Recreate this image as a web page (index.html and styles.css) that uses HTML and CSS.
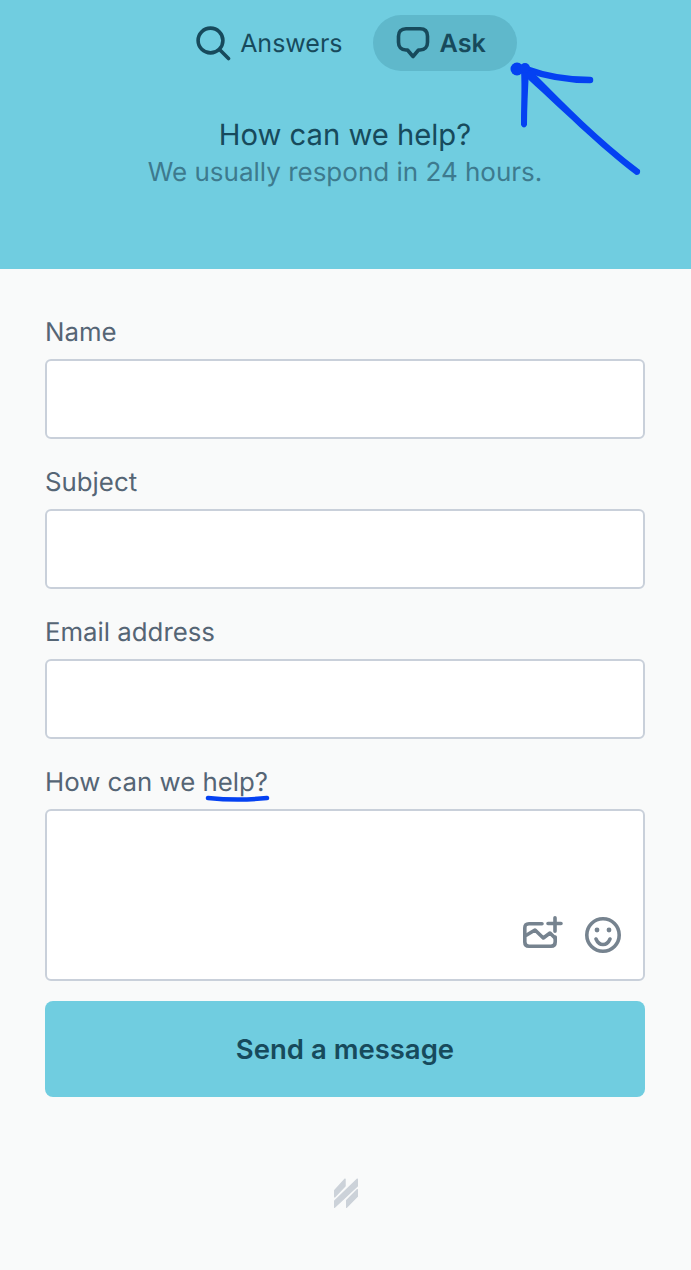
FILE: index.html
```html
<!DOCTYPE html>
<html lang="en">
<head>
    <meta charset="UTF-8">
    <title>How can we help?</title>
    <link rel="stylesheet" href="styles.css">
</head>
<body>

<header class="top">
    <nav class="tabs">
        <a class="tab">
            <svg class="tab-icon" viewBox="0 0 36 36" fill="none" stroke="#174a5c" stroke-width="3.6" stroke-linecap="round">
                <circle cx="15.500" cy="15.500" r="12.400"/>
                <path d="M24.500 24.500L33.500 33.500"/>
            </svg>
            <span class="tab-text">Answers</span>
        </a>
        <a class="tab active">
            <svg class="tab-icon" viewBox="0 0 36 36" fill="none" stroke="#174a5c" stroke-width="3.6" stroke-linejoin="round">
                <path d="M11 3.800h14c5 0 7.500 3 7.500 7.500v6c0 4.500-2.500 7.700-7.500 7.700h-1.500L18 31.500 12.500 25H11c-5 0-7.500-3.200-7.500-7.700v-6C3.500 6.800 6 3.800 11 3.800z"/>
            </svg>
            <span class="tab-text">Ask</span>
        </a>
    </nav>
    <h1 class="title">How can we help?</h1>
    <p class="subtitle">We usually respond in 24 hours.</p>
</header>

<form class="form">
    <label class="field">
        <span class="label">Name</span>
        <input class="input" type="text">
    </label>
    <label class="field">
        <span class="label">Subject</span>
        <input class="input" type="text">
    </label>
    <label class="field">
        <span class="label">Email address</span>
        <input class="input" type="text">
    </label>
    <label class="field field-last">
        <span class="label">How can we help?</span>
        <div class="message">
            <div class="message-tools">
                <svg class="tool-image" viewBox="0 0 40 32" fill="none" stroke="#76838f" stroke-width="3.600" stroke-linecap="round" stroke-linejoin="round">
                    <path d="M19 7.800H6C3 7.800 1.800 9 1.800 12v14c0 3 1.200 4.200 4.200 4.200h22c3 0 4.200-1.200 4.200-4.200V21"/>
                    <path d="M3.700 19L12 14l8.300 8L27 17l5 5"/>
                    <path d="M32 1.800v13.500M25 7.500h13"/>
                </svg>
                <svg class="tool-smile" viewBox="0 0 36 36" fill="none" stroke="#76838f" stroke-width="3.6" stroke-linecap="round">
                    <circle cx="18" cy="18" r="16.200"/>
                    <path d="M11 22c1.500 3.500 4 5.500 7 5.500s5.500-2 7-5.500"/>
                    <circle cx="12" cy="13" r="2.400" fill="#76838f" stroke="none"/>
                    <circle cx="24" cy="13" r="2.400" fill="#76838f" stroke="none"/>
                </svg>
            </div>
        </div>
    </label>
    <button class="send" type="button">Send a message</button>
</form>

<footer class="foot">
    <svg class="logo" viewBox="0 0 24 30" fill="#ccd2d9" stroke="#ccd2d9" stroke-width="1.200" stroke-linejoin="round">
        <path d="M.6 12.500v6.500L11.100 8V1z"/>
        <path d="M.6 23v6.400L23.400 8V1z"/>
        <path d="M12.600 22.500v6.900l10.800-11V11.500z"/>
    </svg>
</footer>

<svg class="scribble" viewBox="0 0 691 1270" fill="none" stroke="#0441f2" stroke-linecap="round" stroke-linejoin="round">
    <path d="M517 69L526 69C545 76 565 80 590 80" stroke-width="6.500"/>
    <path d="M521 70L529 70C528 90 527 108 527 125Q524 130 521 125C521 105 522 88 521 70z" fill="#0441f2" stroke="none"/>
    <path d="M520 68L532 71C565 104 600 140 640 170Q641 175 636 175C600 148 560 108 520 72z" fill="#0441f2" stroke="none"/>
    <circle cx="517" cy="69" r="6.500" fill="#0441f2" stroke="none"/>
    <circle cx="525" cy="68" r="5" fill="#0441f2" stroke="none"/>
    <path d="M208 798C228 800 248 800 267 798" stroke-width="4.500"/>
</svg>

</body>
</html>
```

FILE: styles.css
```css
* {
    box-sizing: border-box;
}

body {
    margin: 0;
    position: relative;
    min-height: 1270px;
    background: #f9fafa;
    font-family: Inter, "Noto Sans", sans-serif;
    color: #556575;
    text-rendering: geometricPrecision;
}

.top {
    height: 269px;
    padding: 15px 2px 0 0;
    background: #70cde0;
    text-align: center;
    color: #174a5c;
}

.tabs {
    display: flex;
    justify-content: center;
}

.tab {
    display: flex;
    align-items: center;
    gap: 9px;
    height: 56px;
    padding: 0 30px 0 23px;
    border-radius: 28px;
    font-size: 25px;
}

.tab.active {
    padding: 0 31px 0 22px;
    background: #5fb8cb;
    font-size: 25.200px;
    font-weight: 600;
}

.tab-icon {
    width: 36px;
    height: 36px;
}

.tab-text {
    padding-top: 1px;
}

.title {
    margin: 47px 0 0 1px;
    font-size: 29.200px;
    line-height: 36px;
    font-weight: 400;
}

.subtitle {
    margin: 2px 0 0 1px;
    font-size: 26px;
    line-height: 34px;
    color: #3d7a8e;
}

.form {
    display: flex;
    flex-direction: column;
    padding: 46px 46px 0 45px;
}

.field {
    display: flex;
    flex-direction: column;
    margin-bottom: 26px;
}

.field-last {
    margin-bottom: 20px;
}

.label {
    height: 44px;
    font-size: 25.800px;
    line-height: 36px;
}

.input {
    height: 80px;
    border: 2px solid #c9d0da;
    border-radius: 6px;
    background: #fff;
}

.message {
    display: flex;
    align-items: flex-end;
    justify-content: flex-end;
    height: 172px;
    padding: 0 22px 26px 0;
    border: 2px solid #c9d0da;
    border-radius: 6px;
    background: #fff;
}

.message-tools {
    display: flex;
    align-items: flex-start;
    gap: 22px;
}

.tool-image {
    width: 40px;
    height: 32px;
    margin-top: -1px;
}

.tool-smile {
    width: 36px;
    height: 36px;
}

.send {
    height: 96px;
    border: 0;
    border-radius: 8px;
    background: #70cde0;
    color: #174a5c;
    font-family: inherit;
    font-size: 27.500px;
    font-weight: 600;
}

.foot {
    display: flex;
    justify-content: center;
    padding-top: 81px;
}

.logo {
    width: 24px;
    height: 30px;
}

.scribble {
    position: absolute;
    top: 0;
    left: 0;
    width: 691px;
    height: 1270px;
    pointer-events: none;
}
```
